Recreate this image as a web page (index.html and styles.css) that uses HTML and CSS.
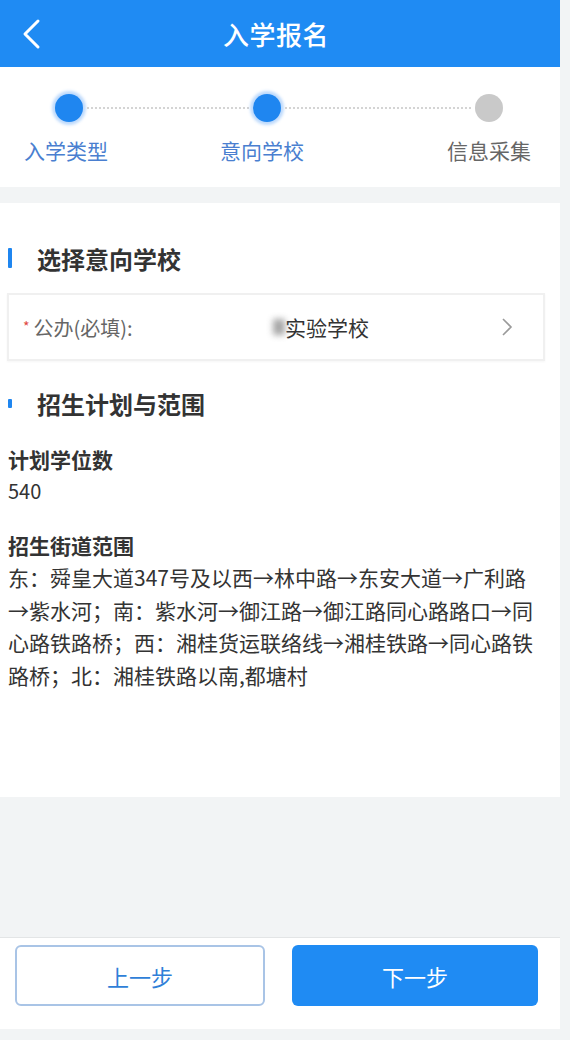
FILE: index.html
```html
<!DOCTYPE html>
<html lang="zh-CN">
<head>
<meta charset="utf-8">
<title>入学报名</title>
<link rel="stylesheet" href="styles.css">
</head>
<body>
<div class="app">
  <header class="topbar">
    <svg class="back" width="20" height="32" viewBox="0 0 20 32"><polyline points="17,3 4,16 17,29" fill="none" stroke="#fff" stroke-width="3" stroke-linecap="round" stroke-linejoin="round"/></svg>
    <h1 class="title">入学报名</h1>
  </header>

  <section class="steps">
    <div class="dots">
      <span class="dot dot-on"></span>
      <span class="link link-a"></span>
      <span class="dot dot-on"></span>
      <span class="link link-b"></span>
      <span class="dot dot-off"></span>
    </div>
    <div class="labels">
      <span class="lbl lbl-1 lbl-on">入学类型</span>
      <span class="lbl lbl-2 lbl-on">意向学校</span>
      <span class="lbl lbl-3">信息采集</span>
    </div>
  </section>

  <section class="card">
    <h2 class="sec sec-1"><span class="bar bar-tall"></span>选择意向学校</h2>
    <div class="field">
      <div class="field-label"><span class="star">*</span>公办(必填):</div>
      <div class="field-value"><span class="smudge"></span>实验学校</div>
      <svg class="chev" width="12" height="20" viewBox="0 0 12 20"><polyline points="2,2 10,10 2,18" fill="none" stroke="#9a9a9a" stroke-width="1.6"/></svg>
    </div>
    <h2 class="sec sec-2"><span class="bar bar-short"></span>招生计划与范围</h2>
    <div class="info">
      <div class="info-key">计划学位数</div>
      <div class="info-val">540</div>
      <div class="info-key info-gap">招生街道范围</div>
      <p class="info-text">东：舜皇大道347号及以西<span class="arr">→</span>林中路<span class="arr">→</span>东安大道<span class="arr">→</span>广利路<br><span class="arr">→</span>紫水河；南：紫水河<span class="arr">→</span>御江路<span class="arr">→</span>御江路同心路路口<span class="arr">→</span>同<br>心路铁路桥；西：湘桂货运联络线<span class="arr">→</span>湘桂铁路<span class="arr">→</span>同心路铁<br>路桥；北：湘桂铁路以南,都塘村</p>
    </div>
  </section>

  <footer class="footer">
    <button class="btn btn-prev">上一步</button>
    <button class="btn btn-next">下一步</button>
  </footer>
</div>
</body>
</html>
```

FILE: styles.css
```css
* { box-sizing: border-box; }

html, body {
  margin: 0;
  padding: 0;
}

body {
  background: #f2f4f5;
  font-family: "Noto Sans CJK SC", "Noto Sans", sans-serif;
  color: #333;
}

.app {
  width: 560px;
  min-height: 1040px;
  display: flex;
  flex-direction: column;
}

/* header */
.topbar {
  height: 67px;
  background: #1f8bf3;
  display: flex;
  align-items: center;
  padding-left: 21px;
}

.back {
  display: block;
  flex: none;
}

.title {
  flex: 1;
  margin: 0 49px 0 0;
  text-align: center;
  color: #fff;
  font-size: 26px;
  font-weight: 500;
  letter-spacing: 0.5px;
}

/* steps */
.steps {
  background: #fff;
  padding: 27px 0 23px;
}

.dots {
  display: flex;
  align-items: center;
  padding: 0 57px 0 55px;
  height: 28px;
}

.dot {
  flex: none;
  width: 28px;
  height: 28px;
  border-radius: 50%;
}

.dot-on {
  background: #1f86f0;
  box-shadow: 0 0 3px 3px rgba(70, 150, 245, 0.35);
}

.dot-off {
  background: #c9c9c9;
}

.link {
  height: 0;
  border-top: 2px dotted #d4d4d4;
  margin: 0 4px;
}

.link-a { flex: 169; }
.link-b { flex: 195; }

.labels {
  display: flex;
  margin-top: 14px;
  padding-left: 6px;
}

.lbl {
  width: 120px;
  text-align: center;
  font-size: 21px;
  line-height: 28px;
  color: #666;
}

.lbl-on { color: #4a7fd0; }
.lbl-2 { margin-left: 76px; }
.lbl-3 { margin-left: 107px; }

/* card */
.card {
  background: #fff;
  margin-top: 16px;
  padding: 40px 0 106px 0;
}

.sec {
  display: flex;
  align-items: center;
  margin: 0;
  height: 30px;
  padding-left: 8px;
  font-size: 24px;
  font-weight: 700;
  color: #333;
}

.bar {
  display: inline-block;
  width: 4px;
  background: #1f86f0;
  margin-right: 25px;
  border-radius: 1px;
}

.bar-tall { height: 20px; }
.bar-short { height: 9px; }

.field {
  margin: 20px 15px 0 7px;
  height: 68px;
  border: 2px solid #f0f0f0;
  box-shadow: 0 1px 2px rgba(0, 0, 0, 0.04);
  display: flex;
  align-items: center;
  padding: 0 30px 0 14px;
}

.field-label {
  width: 262px;
  font-size: 20px;
  color: #666;
}

.star {
  color: #e0483f;
  font-size: 14px;
  vertical-align: 4px;
  margin-right: 4px;
}

.field-value {
  flex: 1;
  font-size: 21px;
  color: #333;
  display: flex;
  align-items: center;
}

.smudge {
  display: inline-block;
  width: 12px;
  height: 16px;
  margin-left: -12px;
  background: #8a8a8a;
  filter: blur(3px);
  opacity: 0.75;
}

.chev {
  display: block;
  flex: none;
}

.sec-2 { margin-top: 27px; }

.info {
  padding: 0 17px 0 8px;
  margin-top: 25px;
}

.info-key {
  font-size: 21px;
  font-weight: 700;
  line-height: 32px;
  color: #333;
}

.info-val {
  font-size: 20px;
  line-height: 32px;
  color: #333;
}

.info-gap { margin-top: 22px; }

.info-text {
  margin: 0;
  font-size: 21px;
  line-height: 32.5px;
  color: #333;
  word-break: break-all;
}

.arr {
  display: inline-block;
  width: 1em;
  text-align: center;
  line-height: 1;
}

/* footer */
.footer {
  margin-top: auto;
  margin-bottom: 11px;
  background: #fff;
  border-top: 1px solid #e3e5e6;
  height: 92px;
  padding: 7px 22px 0 15px;
  display: flex;
  gap: 27px;
  align-items: flex-start;
}

.btn {
  flex: 1;
  height: 61px;
  border-radius: 6px;
  font-family: "Noto Sans CJK SC", sans-serif;
  font-size: 22px;
  cursor: pointer;
}

.btn-prev {
  background: #fff;
  border: 2px solid #a9c4e6;
  color: #2f7fd8;
}

.btn-next {
  background: #1f8bf3;
  border: none;
  color: #fff;
}
```
